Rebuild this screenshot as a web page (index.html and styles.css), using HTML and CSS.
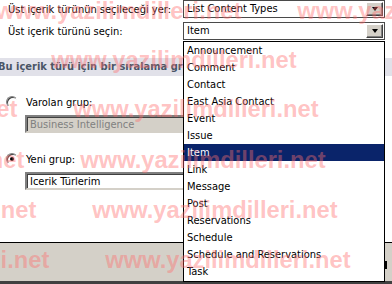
FILE: index.html
```html
<!DOCTYPE html>
<html lang="tr">
<head>
    <meta charset="UTF-8">
    <meta name="viewport" content="width=device-width, initial-scale=1.0">
    <title>İçerik Türü Oluştur</title>
    <link rel="stylesheet" href="styles.css">
</head>
<body>
    <div class="page">
        <div class="parent-rows">
            <label class="field-label">Üst içerik türünün seçileceği yer:</label>
            <div class="combo">
                <span class="combo-text">List Content Types</span>
                <span class="combo-btn"><span class="arrow"></span></span>
            </div>
            <label class="field-label">Üst içerik türünü seçin:</label>
            <div class="combo">
                <span class="combo-text">Item</span>
                <span class="combo-btn"><span class="arrow"></span></span>
            </div>
        </div>

        <div class="section-bar">Bu içerik türü için bir sıralama grubu belirtin</div>

        <div class="group-options">
            <div class="option">
                <span class="radio"></span>
                <span>Varolan grup:</span>
            </div>
            <div class="textbox disabled">Business Intelligence</div>
            <div class="option second">
                <span class="radio checked"></span>
                <span>Yeni grup:</span>
            </div>
            <div class="textbox">Icerik Türlerim</div>
        </div>

        <div class="footer">
            <span class="footer-btn"></span>
        </div>

        <!-- open list of the second combo -->
        <ul class="dropdown">
            <li>Announcement</li>
            <li>Comment</li>
            <li>Contact</li>
            <li>East Asia Contact</li>
            <li>Event</li>
            <li>Issue</li>
            <li class="selected">Item</li>
            <li>Link</li>
            <li>Message</li>
            <li>Post</li>
            <li>Reservations</li>
            <li>Schedule</li>
            <li>Schedule and Reservations</li>
            <li>Task</li>
        </ul>

        <div class="watermark" aria-hidden="true">
            <div class="wm-line l1">www.yazilimdilleri.net<span>www.yazilimdilleri.net</span></div>
            <div class="wm-line l2">www.yazilimdilleri.net<span>www.yazilimdilleri.net</span></div>
            <div class="wm-line l3">www.yazilimdilleri.net<span>www.yazilimdilleri.net</span></div>
            <div class="wm-line l4">www.yazilimdilleri.net<span>www.yazilimdilleri.net</span></div>
            <div class="wm-line l5">www.yazilimdilleri.net<span>www.yazilimdilleri.net</span></div>
            <div class="wm-line l6">www.yazilimdilleri.net<span>www.yazilimdilleri.net</span></div>
        </div>
    </div>
</body>
</html>
```

FILE: styles.css
```css
:root {
    --face: #d4d0c8;
    --shadow: #808080;
    --dark: #404040;
    --highlight: #0a246a;
    --bar-bg: #e1e1e9;
    --bar-text: #4a5566;
}
* {
    box-sizing: border-box;
    margin: 0;
    padding: 0;
}
body {
    font-family: "DejaVu Sans Condensed", "DejaVu Sans", sans-serif;
    font-size: 11px;
    color: #000;
    background: #fff;
    overflow: hidden;
}
.page {
    position: relative;
    width: 392px;
    height: 284px;
    overflow: hidden;
}

/* top rows */
.parent-rows {
    display: grid;
    grid-template-columns: 175px 202px;
    grid-auto-rows: 18px;
    row-gap: 4px;
    padding-left: 8px;
    align-items: center;
}
.field-label {
    display: block;
}
.combo {
    position: relative;
    height: 18px;
    border: 1px solid #4a4a4a;
    background: #fff;
    padding-left: 3px;
    line-height: 16px;
}
.combo-btn {
    position: absolute;
    right: 1px;
    top: 1px;
    width: 17px;
    height: 14px;
    background: var(--face);
    border: 1px solid;
    border-color: #fff var(--dark) var(--dark) #fff;
    box-shadow: inset -1px -1px var(--shadow);
    display: flex;
    align-items: center;
    justify-content: center;
}
.arrow {
    width: 0;
    height: 0;
    border-left: 3.5px solid transparent;
    border-right: 3.5px solid transparent;
    border-top: 4px solid #000;
}

/* section title */
.section-bar {
    margin-top: 18px;
    height: 18px;
    line-height: 18px;
    background: var(--bar-bg);
    color: var(--bar-text);
    font-weight: bold;
    text-indent: -2px;
    white-space: nowrap;
}

/* radio group */
.group-options {
    padding-left: 6px;
    padding-top: 18px;
}
.option {
    display: flex;
    align-items: center;
    gap: 8px;
    height: 16px;
}
.option.second {
    margin-top: 18px;
}
.radio {
    position: relative;
    width: 12px;
    height: 12px;
    border-radius: 50%;
    background: #fff;
    border: 1px solid;
    border-color: var(--shadow) #fff #fff var(--shadow);
    box-shadow: inset 1px 1px var(--dark);
}
.radio.checked::after {
    content: "";
    position: absolute;
    left: 3px;
    top: 3px;
    width: 4px;
    height: 4px;
    border-radius: 50%;
    background: #000;
}
.textbox {
    margin: 5px 0 0 19px;
    width: 340px;
    height: 18px;
    line-height: 15px;
    padding-left: 3px;
    border: 2px solid;
    border-color: var(--shadow) var(--face) var(--face) var(--shadow);
    box-shadow: inset 1px 1px var(--dark);
    background: #fff;
}
.textbox.disabled {
    background: var(--face);
    color: var(--shadow);
}

/* bottom strip */
.footer {
    position: relative;
    margin-top: 52px;
    height: 42px;
    background: var(--face);
    border-top: 1px solid #000;
    border-bottom: 3px solid var(--dark);
}
.footer-btn {
    position: absolute;
    left: 385px;
    top: 18px;
    width: 10px;
    height: 8px;
    border-left: 2px solid #000;
}

/* open list */
.dropdown {
    position: absolute;
    left: 183px;
    top: 41px;
    width: 202px;
    height: 241px;
    list-style: none;
    background: #fff;
    border: 1px solid #000;
}
.dropdown li {
    height: 17px;
    line-height: 17px;
    padding-left: 3px;
    white-space: nowrap;
}
.dropdown li.selected {
    background: var(--highlight);
    color: #fff;
}

/* site watermark */
.watermark {
    position: absolute;
    inset: 0;
    pointer-events: none;
    font-family: "Liberation Sans", Arial, sans-serif;
    font-weight: bold;
    font-size: 23.7px;
    color: rgba(255, 110, 110, 0.42);
}
.wm-line {
    position: absolute;
    white-space: nowrap;
    line-height: 24px;
}
.wm-line span {
    margin-left: 56px;
}
.l1 { top: -1px; left: -4px; }
.l2 { top: 48px; left: -250px; }
.l3 { top: 97px; left: -228px; }
.l4 { top: 148px; left: -221px; }
.l5 { top: 198px; left: -209px; }
.l6 { top: 248px; left: -196px; }
```
